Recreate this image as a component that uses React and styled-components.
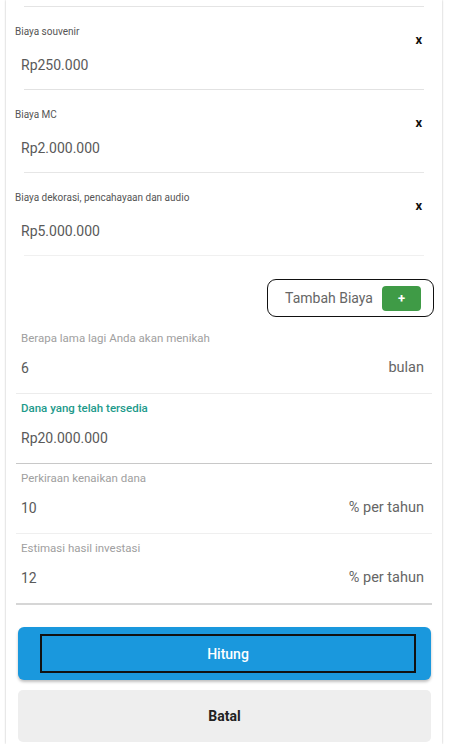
import React from "react";
import styled, { createGlobalStyle } from "styled-components";

const costs = [
  { label: "Biaya souvenir", value: "Rp250.000", line: "#e2e2e2" },
  { label: "Biaya MC", value: "Rp2.000.000", line: "#e6e6e6" },
  { label: "Biaya dekorasi, pencahayaan dan audio", value: "Rp5.000.000", line: "#f0f0f0" },
];

const fields = [
  { label: "Berapa lama lagi Anda akan menikah", value: "6", unit: "bulan", line: "#ececec" },
  { label: "Dana yang telah tersedia", value: "Rp20.000.000", active: true, line: "#c8c8c8" },
  { label: "Perkiraan kenaikan dana", value: "10", unit: "% per tahun", line: "#efefef" },
  { label: "Estimasi hasil investasi", value: "12", unit: "% per tahun", line: "#d6d6d6", thick: true },
];

const App = () => {
  return (
    <>
      <GlobalStyle />
      <Card>
        <Divider $color="#e4e4e4" />
        {costs.map((c) => (
          <CostItem key={c.label}>
            <CostHeader>
              <CostLabel>{c.label}</CostLabel>
              <RemoveButton>x</RemoveButton>
            </CostHeader>
            <CostValue>{c.value}</CostValue>
            <Divider $color={c.line} />
          </CostItem>
        ))}

        <AddRow>
          <AddButton>
            Tambah Biaya
            <PlusBox>+</PlusBox>
          </AddButton>
        </AddRow>

        <Fields>
          {fields.map((f) => (
            <Field key={f.label} $line={f.line} $thick={f.thick}>
              <FieldLabel $active={f.active}>{f.label}</FieldLabel>
              <FieldRow>
                <FieldValue>{f.value}</FieldValue>
                {f.unit && <Unit>{f.unit}</Unit>}
              </FieldRow>
            </Field>
          ))}
        </Fields>

        <Actions>
          <PrimaryButton>
            <FocusRing>Hitung</FocusRing>
          </PrimaryButton>
          <SecondaryButton>Batal</SecondaryButton>
        </Actions>
      </Card>
    </>
  );
};

export default App;

const GlobalStyle = createGlobalStyle`
  body {
    margin: 0;
    background: #ffffff;
    font-family: Roboto, "Noto Sans", Arial, sans-serif;
  }
`;

const Card = styled.div`
  margin: 0 8px 0 6px;
  padding: 6px 9px 0;
  min-height: 744px;
  background: #fff;
  box-shadow: 0 0 2px rgba(0, 0, 0, 0.28);
  box-sizing: border-box;
`;

const Divider = styled.div`
  height: 1px;
  margin: 0 9px;
  background: ${(p) => p.$color};
`;

const CostItem = styled.div`
  padding-top: 18px;
`;

const CostHeader = styled.div`
  display: flex;
  justify-content: space-between;
  align-items: flex-start;
  height: 14px;
`;

const CostLabel = styled.span`
  font-size: 10px;
  line-height: 14px;
  color: #555;
`;

const RemoveButton = styled.span`
  margin: 8px 11px 0 0;
  font-size: 13px;
  line-height: 14px;
  font-weight: 700;
  color: #111;
`;

const CostValue = styled.div`
  margin-top: 16px;
  padding: 0 0 14px 6px;
  font-size: 14px;
  line-height: 20px;
  color: #5a5a5a;
`;

const AddRow = styled.div`
  display: flex;
  justify-content: flex-end;
  margin: 23px -1px 0 0;
`;

const AddButton = styled.div`
  display: flex;
  align-items: center;
  gap: 9px;
  height: 38px;
  box-sizing: border-box;
  padding: 0 12px 0 17px;
  border: 1.5px solid #111;
  border-radius: 9px;
  font-size: 14px;
  color: #666;
`;

const PlusBox = styled.span`
  display: flex;
  align-items: center;
  justify-content: center;
  width: 39px;
  height: 25px;
  border-radius: 4px;
  background: #3f9b46;
  color: #fff;
  font-size: 13px;
  font-weight: 700;
`;

const Fields = styled.div`
  margin-top: 7px;
  padding: 0 1px;
`;

const Field = styled.div`
  padding: 7px 0 15px;
  border-bottom: ${(p) => (p.$thick ? "2px" : "1px")} solid ${(p) => p.$line};
`;

const FieldLabel = styled.div`
  padding-left: 5px;
  font-size: 11.5px;
  line-height: 14px;
  color: ${(p) => (p.$active ? "#1d9a8b" : "#a0a0a0")};
  font-weight: ${(p) => (p.$active ? 500 : 400)};
`;

const FieldRow = styled.div`
  display: flex;
  justify-content: space-between;
  margin-top: 13px;
  padding: 0 8px 0 5px;
  font-size: 14px;
  line-height: 20px;
`;

const FieldValue = styled.span`
  color: #5a5a5a;
`;

const Unit = styled.span`
  color: #666;
  font-size: 14.5px;
`;

const Actions = styled.div`
  display: flex;
  flex-direction: column;
  gap: 10px;
  margin: 22px 2px 0 3px;
`;

const PrimaryButton = styled.div`
  height: 53px;
  padding: 7px 15px 7px 22px;
  box-sizing: border-box;
  border-radius: 6px;
  background: #1a98dd;
  box-shadow: 0 2px 3px rgba(0, 0, 0, 0.25);
`;

const FocusRing = styled.div`
  display: flex;
  align-items: center;
  justify-content: center;
  height: 100%;
  box-sizing: border-box;
  border: 2px solid #111;
  color: #fff;
  font-size: 14px;
  font-weight: 500;
`;

const SecondaryButton = styled.div`
  display: flex;
  align-items: center;
  justify-content: center;
  height: 52px;
  border-radius: 5px;
  background: #eeeeee;
  color: #222;
  font-size: 14px;
  font-weight: 700;
`;
